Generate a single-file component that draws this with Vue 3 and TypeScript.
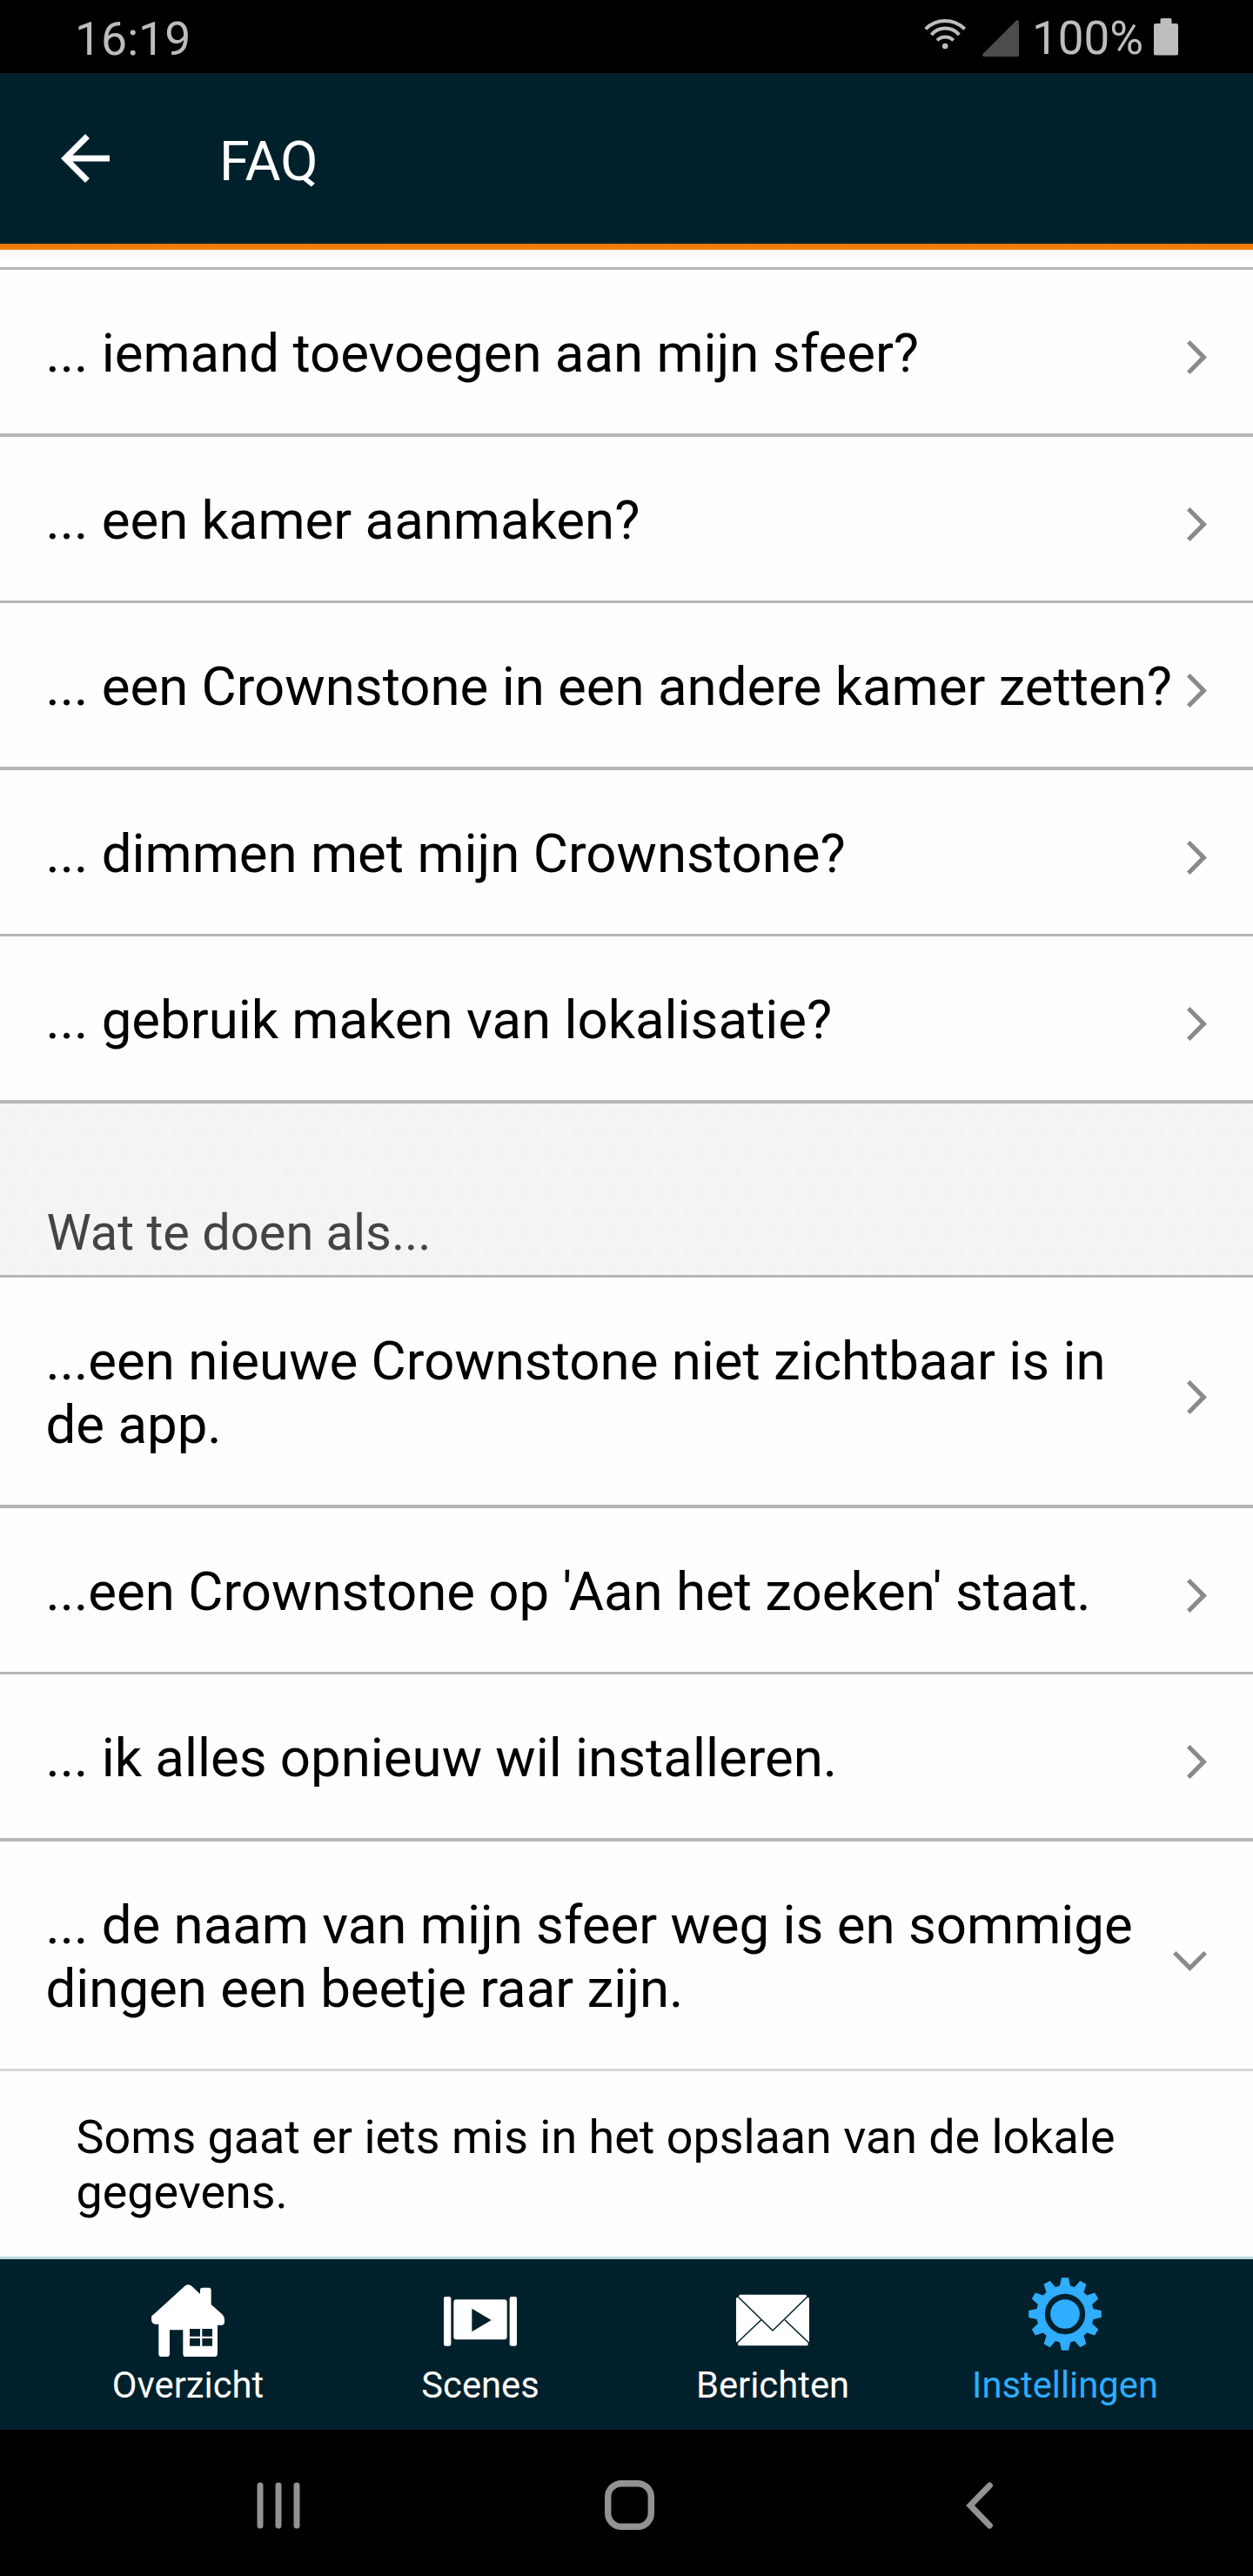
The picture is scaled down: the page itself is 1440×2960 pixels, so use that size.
<script setup lang="ts">
interface Question {
  text: string
  open?: boolean
  answer?: string
  thick?: boolean
}

const howTo: Question[] = [
  { text: '... iemand toevoegen aan mijn sfeer?', thick: true },
  { text: '... een kamer aanmaken?' },
  { text: '... een Crownstone in een andere kamer zetten?', thick: true },
  { text: '... dimmen met mijn Crownstone?' },
  { text: '... gebruik maken van lokalisatie?', thick: true },
]

const whatIf: Question[] = [
  { text: '...een nieuwe Crownstone niet zichtbaar is in\nde app.', thick: true },
  { text: "...een Crownstone op 'Aan het zoeken' staat." },
  { text: '... ik alles opnieuw wil installeren.', thick: true },
  {
    text: '... de naam van mijn sfeer weg is en sommige\ndingen een beetje raar zijn.',
    open: true,
    answer: 'Soms gaat er iets mis in het opslaan van de lokale\ngegevens.',
  },
]

// Twelve-toothed cog outline around a 252 unit wide box
const gearPath = (() => {
  const c = 126
  const profile: [number, number][] = [
    [-10.5, 99],
    [-5.5, 126],
    [5.5, 126],
    [10.5, 99],
  ]
  const points: string[] = []
  for (let i = 0; i < 12; i++) {
    for (const [deg, r] of profile) {
      const a = ((i * 30 + deg) * Math.PI) / 180
      points.push(`${(c + r * Math.sin(a)).toFixed(2)} ${(c - r * Math.cos(a)).toFixed(2)}`)
    }
  }
  return `M${points.join('L')}Z`
})()
</script>

<template>
  <div class="screen">
    <div class="status">
      <span class="clock">16:19</span>
      <div class="indicators">
        <svg class="wifi" width="48" height="36" viewBox="306 62 144 108">
          <g fill="none" stroke="#bdbdbd" stroke-width="12">
            <path d="M311 99A95 95 0 0 1 446 99" />
            <path d="M331 119A63 63 0 0 1 427 119" />
            <path d="M351 138A40 40 0 0 1 407 138" />
          </g>
          <circle cx="378.500" cy="158" r="10" fill="#bdbdbd" />
        </svg>
        <svg class="signal" width="42" height="42" viewBox="0 0 42 42">
          <path d="M39 .6Q42-.5 42 2.500V40.500Q42 42 40.500 42H1.500Q-.8 41 .6 39Z" fill="#4d4d4d" />
        </svg>
        <span class="percent">100%</span>
        <svg class="battery" width="28" height="43" viewBox="0 0 28 43">
          <path d="M9 0H19Q20.500 0 20.500 1.500V6H26Q28 6 28 8V40.500Q28 42.500 26 42.500H2Q0 42.500 0 40.500V8Q0 6 2 6H7.500V1.500Q7.500 0 9 0Z" fill="#bdbdbd" />
        </svg>
      </div>
    </div>

    <header class="header">
      <svg class="back" width="84" height="84" viewBox="0 0 24 24">
        <path d="M20 11H7.830l5.590-5.590L12 4l-8 8 8 8 1.410-1.410L7.830 13H20v-2z" fill="#fff" />
      </svg>
      <h1>FAQ</h1>
    </header>
    <div class="accent"></div>

    <main class="content">
      <div class="sliver"></div>
      <div v-for="q in howTo" :key="q.text" class="row" :class="{ thick: q.thick }">
        <p>{{ q.text }}</p>
        <svg class="chevron" width="23" height="39" viewBox="0 0 23 39">
          <path d="M3.600 0L23 19.500L3.600 39L0 35.400L15.700 19.500L0 3.600Z" fill="#8a8a8a" />
        </svg>
      </div>

      <div class="section"><h2>Wat te doen als...</h2></div>

      <template v-for="q in whatIf" :key="q.text">
        <div class="row" :class="{ thick: q.thick, open: q.open }">
          <p>{{ q.text }}</p>
          <svg v-if="q.open" class="chevron" width="39" height="23" viewBox="0 0 39 23">
            <path d="M0 3.600L3.600 0L19.500 15.700L35.400 0L39 3.600L19.500 23Z" fill="#8a8a8a" />
          </svg>
          <svg v-else class="chevron" width="23" height="39" viewBox="0 0 23 39">
            <path d="M3.600 0L23 19.500L3.600 39L0 35.400L15.700 19.500L0 3.600Z" fill="#8a8a8a" />
          </svg>
        </div>
        <div v-if="q.answer" class="answer">{{ q.answer }}</div>
      </template>
    </main>

    <nav class="tabs">
      <a class="tab">
        <svg width="84" height="92" viewBox="222 111 252 276">
          <path
            fill="#fff"
            fill-rule="evenodd"
            d="M339 139Q349 132 359 139L390 168V154Q390 146 398 146H420Q428 146 428 154V204L466 238Q474 246 474 256V264Q474 275 464 275H450V373Q450 384 440 384H341Q331 384 331 374V292H285V374Q285 384 275 384H257Q247 384 247 374V272H235Q222 270 222 256V248Q222 242 232 236ZM354 288V314H390V288ZM397 288V314H432V288ZM354 321V347H390V321ZM397 321V347H432V321Z"
          />
        </svg>
        <span>Overzicht</span>
      </a>
      <a class="tab">
        <svg width="84" height="92" viewBox="210 111 252 276">
          <g fill="#fff">
            <rect x="210" y="177" width="25" height="170" rx="6" />
            <rect x="437" y="177" width="25" height="170" rx="6" />
            <path fill-rule="evenodd" d="M253 187H419Q428 187 428 196V316Q428 325 419 325H253Q244 325 244 316V196Q244 187 253 187ZM307 218V298L374 258Z" />
          </g>
        </svg>
        <span>Scenes</span>
      </a>
      <a class="tab">
        <svg width="84" height="92" viewBox="318 111 252 276">
          <path d="M332 170H557Q562 171 561 176L570 182V332L565 340Q568 346 562 346H328Q323 346 325 338L318 332V182L327 176Q327 171 332 170Z" fill="#fff" />
          <g fill="none" stroke="#00212b" stroke-width="4.500">
            <path d="M321 174L444 294L567 174" />
            <path d="M404 257L321 337M486 257L569 337" />
          </g>
        </svg>
        <span>Berichten</span>
      </a>
      <a class="tab active">
        <svg width="84" height="92" viewBox="0 0 252 276">
          <path :d="gearPath" fill="#2fadff" />
          <circle cx="126" cy="126" r="60" fill="#2fadff" stroke="#00212b" stroke-width="19" />
        </svg>
        <span>Instellingen</span>
      </a>
    </nav>

    <div class="system">
      <svg class="recents" width="50" height="54" viewBox="0 0 50 54">
        <g fill="#929292">
          <rect x="0.500" y="0.500" width="7" height="53" rx="3.500" />
          <rect x="21.500" y="0.500" width="7" height="53" rx="3.500" />
          <rect x="42.500" y="0.500" width="7" height="53" rx="3.500" />
        </g>
      </svg>
      <svg class="home" width="57" height="57" viewBox="0 0 57 57">
        <rect x="3.700" y="3.700" width="49.600" height="49.600" rx="15.500" fill="none" stroke="#929292" stroke-width="7.400" />
      </svg>
      <svg class="return" width="31" height="54" viewBox="0 0 31 54">
        <path d="M27.300 4L5 27L27.300 50" fill="none" stroke="#929292" stroke-width="7" stroke-linecap="round" />
      </svg>
    </div>
  </div>
</template>

<style>
body {
  background: #000;
}
</style>

<style scoped>
.screen {
  width: 1440px;
  height: 2960px;
  display: flex;
  flex-direction: column;
  overflow: hidden;
  font-family: Roboto, 'Liberation Sans', sans-serif;
  background: #fefefe;
}
h1,
h2,
p {
  margin: 0;
  font-weight: 400;
}
svg {
  display: block;
  flex: none;
}
.status {
  box-sizing: border-box;
  height: 84px;
  flex: none;
  display: flex;
  justify-content: space-between;
  padding: 0 86px;
  background: #000;
  color: #bdbdbd;
  font-size: 53.5px;
  line-height: 89px;
}
.indicators {
  display: flex;
}
.wifi {
  margin: 21px 19px 0 0;
}
.signal {
  margin: 23px 15px 0 0;
}
.percent {
  width: 140px;
  font-size: 53px;
  white-space: nowrap;
}
.battery {
  margin: 21px 0 0 0;
}
.header {
  height: 196px;
  flex: none;
  display: flex;
  align-items: center;
  padding-left: 56px;
  background: #00212b;
}
h1 {
  margin-left: 112px;
  padding-top: 7px;
  color: #fff;
  font-size: 63px;
  line-height: 74px;
}
.accent {
  height: 7px;
  flex: none;
  background: linear-gradient(#e47600, #fb8200);
}
.content {
  flex: 1;
  min-height: 0;
  overflow: hidden;
}
.sliver {
  height: 20px;
  background: linear-gradient(#f7f7f7, #fefefe 14px);
  border-bottom: 3px solid #b6b6b6;
}
.row {
  display: flex;
  align-items: center;
  justify-content: space-between;
  padding: 60px 53px 55px 52.5px;
  border-bottom: 3px solid #b6b6b6;
}
.row.thick {
  border-bottom-width: 4px;
}
.row.open {
  border-bottom-color: #d8d8d8;
}
.row p {
  flex: 0 0 1305px;
  font-size: 61.75px;
  line-height: 73px;
  white-space: pre-line;
  color: #000;
}
.row.open p {
  flex-basis: 1285px;
}
.chevron {
  margin-top: 8px;
}
.section {
  box-sizing: border-box;
  height: 200px;
  padding: 115px 0 0 53.5px;
  border-bottom: 3px solid #b6b6b6;
  background-color: #f5f5f5;
  background-image: radial-gradient(circle at 13px 11px, #f3f3f3 5px, transparent 10px),
    radial-gradient(circle at 0 34px, #f3f3f3 5px, transparent 10px),
    radial-gradient(circle at 25.6px 34px, #f3f3f3 5px, transparent 10px);
  background-size: 25.6px 45.4px;
}
h2 {
  font-size: 57.75px;
  line-height: 66px;
  color: #444;
}
.answer {
  padding: 44px 100px 0 87.5px;
  font-size: 53.85px;
  line-height: 63px;
  white-space: pre-line;
  color: #000;
}
.tabs {
  box-sizing: border-box;
  height: 199px;
  flex: none;
  display: flex;
  padding: 21px 48px 0;
  border-top: 3px solid #b8dade;
  background: #00212b;
}
.tab {
  width: 336px;
  display: flex;
  flex-direction: column;
  align-items: center;
  color: #fff;
  font-size: 41.75px;
  line-height: 50px;
}
.tab span {
  margin-top: 7px;
}
.tab.active {
  color: #2fadff;
}
.system {
  height: 168px;
  flex: none;
  display: flex;
  background: #000;
}
.recents {
  margin: 59.5px 0 0 295px;
}
.home {
  margin: 58px 0 0 349.5px;
}
.return {
  margin: 59.5px 0 0 358px;
}
</style>
